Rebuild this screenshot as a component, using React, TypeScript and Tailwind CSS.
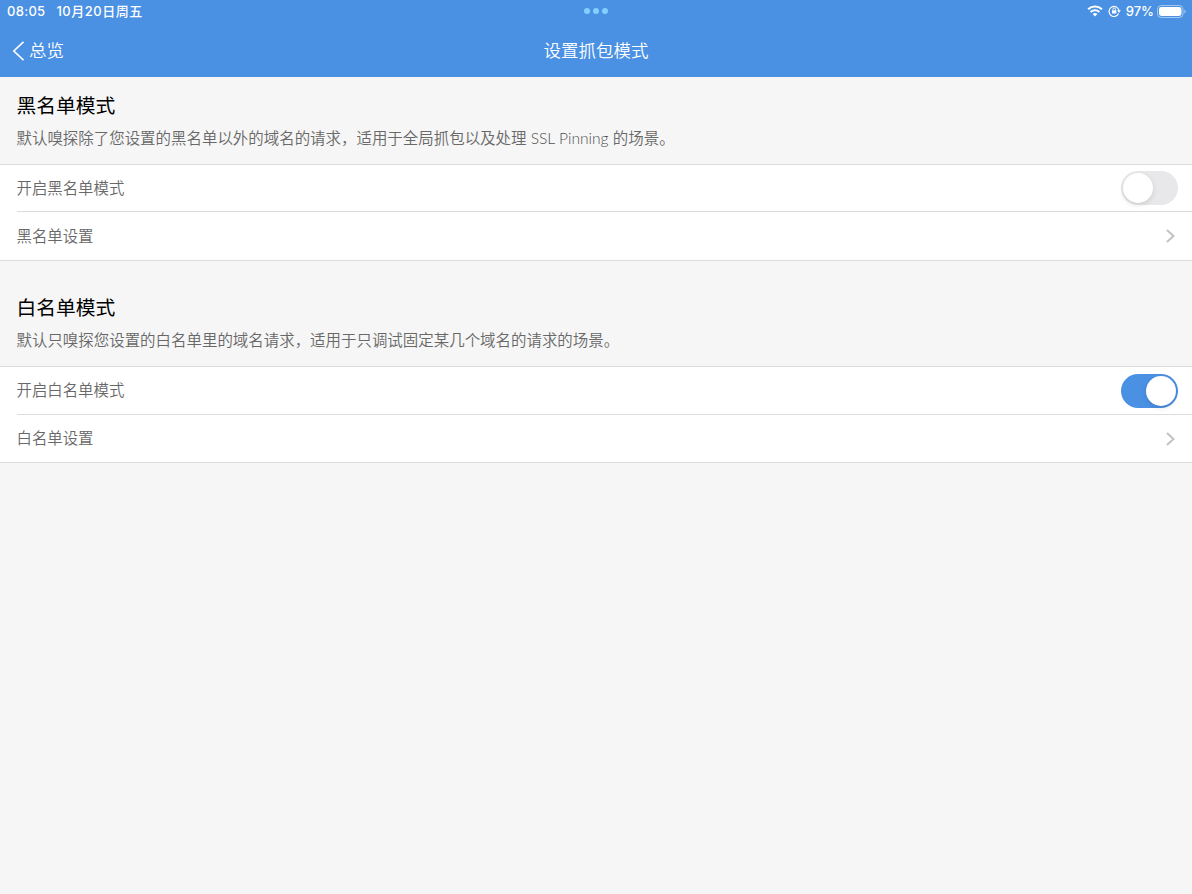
import { useState, type ReactNode } from 'react';

function StatusBar() {
  return (
    <div className="grid h-[22px] grid-cols-3 items-center pl-[7px] pr-[6px] text-[13px] leading-[22px] font-medium">
      <div className="flex gap-[11px] whitespace-nowrap">
        <span className="tracking-[0.3px]">08:05</span>
        <span className="tracking-[0.5px]">10月20日周五</span>
      </div>
      <div className="flex justify-center gap-[3px] pr-[2px]">
        <i className="size-[6px] rounded-full bg-[#83cfff]" />
        <i className="size-[6px] rounded-full bg-[#83cfff]" />
        <i className="size-[6px] rounded-full bg-[#83cfff]" />
      </div>
      <div className="flex items-center justify-end">
        <svg className="mr-[5px] h-[12px] w-[16px]" viewBox="0 0 16 12" fill="none">
          <path d="M1.1 4.2a10.1 10.1 0 0 1 13.8 0" stroke="white" strokeWidth="2" />
          <path d="M3.6 6.9a6.4 6.4 0 0 1 8.8 0" stroke="white" strokeWidth="2" />
          <path d="M5.6 9.1a3.5 3.5 0 0 1 4.8 0L8 11.5z" fill="white" />
        </svg>
        <svg className="mr-[5px] h-[12px] w-[13px]" viewBox="0 0 13 12" fill="none">
          <path d="M10.6 8.6A5 5 0 1 1 11 5.6" stroke="white" strokeWidth="1.2" />
          <path d="M9.2 5.3h3.6L11 8z" fill="white" />
          <rect x="4" y="5.2" width="4.4" height="3.4" rx="0.5" fill="white" />
          <path d="M4.9 5.4V4.3a1.3 1.3 0 0 1 2.6 0v1.1" stroke="white" strokeWidth="0.9" />
        </svg>
        <span className="mr-[3px]">97%</span>
        <svg className="h-[13px] w-[29px]" viewBox="0 0 29 13" fill="none">
          <rect x="0.5" y="0.5" width="25.5" height="12" rx="3.8" stroke="white" strokeOpacity="0.5" />
          <rect x="2" y="2" width="22.5" height="9" rx="2.4" fill="white" />
          <path d="M27.4 4.4c1.7.7 1.7 3.5 0 4.2z" fill="white" fillOpacity="0.5" />
        </svg>
      </div>
    </div>
  );
}

function Switch({ initial, label }: { initial: boolean; label: string }) {
  const [on, setOn] = useState(initial);
  return (
    <button
      role="switch"
      aria-checked={on}
      aria-label={label}
      onClick={() => setOn(!on)}
      className={`flex h-[34px] w-[57px] items-center rounded-full px-[2px] ${
        on ? 'justify-end bg-[#4a90e3]' : 'justify-start bg-[#e8e8ea]'
      }`}
    >
      <span className="size-[30px] rounded-full bg-white shadow-[0_2px_5px_rgba(0,0,0,0.12)]" />
    </button>
  );
}

interface SectionProps {
  title: string;
  description: ReactNode;
  toggle: string;
  settings: string;
  enabled: boolean;
  headerClass: string;
  firstRowClass: string;
  secondRowClass: string;
  labelClass: string;
}

function Section(props: SectionProps) {
  return (
    <section>
      <header className={`flex flex-col justify-end pb-[14px] pl-[16.5px] ${props.headerClass}`}>
        <h2 className="text-[19.75px] leading-[30px] text-black">{props.title}</h2>
        <p className="mt-[5px] text-[15.46px] leading-[24px] font-[350]">{props.description}</p>
      </header>
      <div className="border-y border-[#dcdcdd] bg-white pl-[16.5px] text-[15.42px] font-[350]">
        <div
          className={`flex items-center justify-between border-b border-[#dcdcdd] pr-[14px] ${props.firstRowClass}`}
        >
          <span className={props.labelClass}>{props.toggle}</span>
          <Switch initial={props.enabled} label={props.toggle} />
        </div>
        <div className={`flex items-center justify-between pr-[17px] ${props.secondRowClass}`}>
          <span className={props.labelClass}>{props.settings}</span>
          <svg className="h-[14px] w-[9px]" viewBox="0 0 9 14" fill="none">
            <path d="M1 1l6.5 6L1 13" stroke="#c2c2c5" strokeWidth="2" />
          </svg>
        </div>
      </div>
    </section>
  );
}

export default function App() {
  return (
    <div className="h-[894px] w-full overflow-hidden bg-[#f6f6f6] font-[Lato,'Noto_Sans_CJK_SC',sans-serif] text-[#686868]">
      <div className="h-[77px] bg-[#4a90e3] font-[Inter,'Noto_Sans_CJK_SC',sans-serif] text-white">
        <StatusBar />
        <nav className="grid h-[55px] grid-cols-3 items-center pt-[2px] text-[17.5px] leading-[26px] font-[350]">
          <button className="flex items-center pl-[12px]">
            <svg className="mt-[1px] mr-[4px] h-[20px] w-[13px]" viewBox="0 0 13 20" fill="none">
              <path d="M11.5 0.8L1.8 10l9.7 9.2" stroke="white" strokeWidth="1.6" />
            </svg>
            总览
          </button>
          <h1 className="text-center">设置抓包模式</h1>
        </nav>
      </div>
      <Section
        title="黑名单模式"
        description={
          <>
            默认嗅探除了您设置的黑名单以外的域名的请求，适用于全局抓包以及处理{' '}
            <span className="text-[15.6px] font-light text-[#505050]">SSL Pinning</span> 的场景。
          </>
        }
        toggle="开启黑名单模式"
        settings="黑名单设置"
        enabled={false}
        headerClass="h-[87px]"
        firstRowClass="h-[47px]"
        secondRowClass="h-[48px]"
        labelClass="pt-[2px]"
      />
      <Section
        title="白名单模式"
        description="默认只嗅探您设置的白名单里的域名请求，适用于只调试固定某几个域名的请求的场景。"
        toggle="开启白名单模式"
        settings="白名单设置"
        enabled
        headerClass="h-[105px]"
        firstRowClass="h-[48px]"
        secondRowClass="h-[47px]"
        labelClass="pt-0"
      />
    </div>
  );
}
